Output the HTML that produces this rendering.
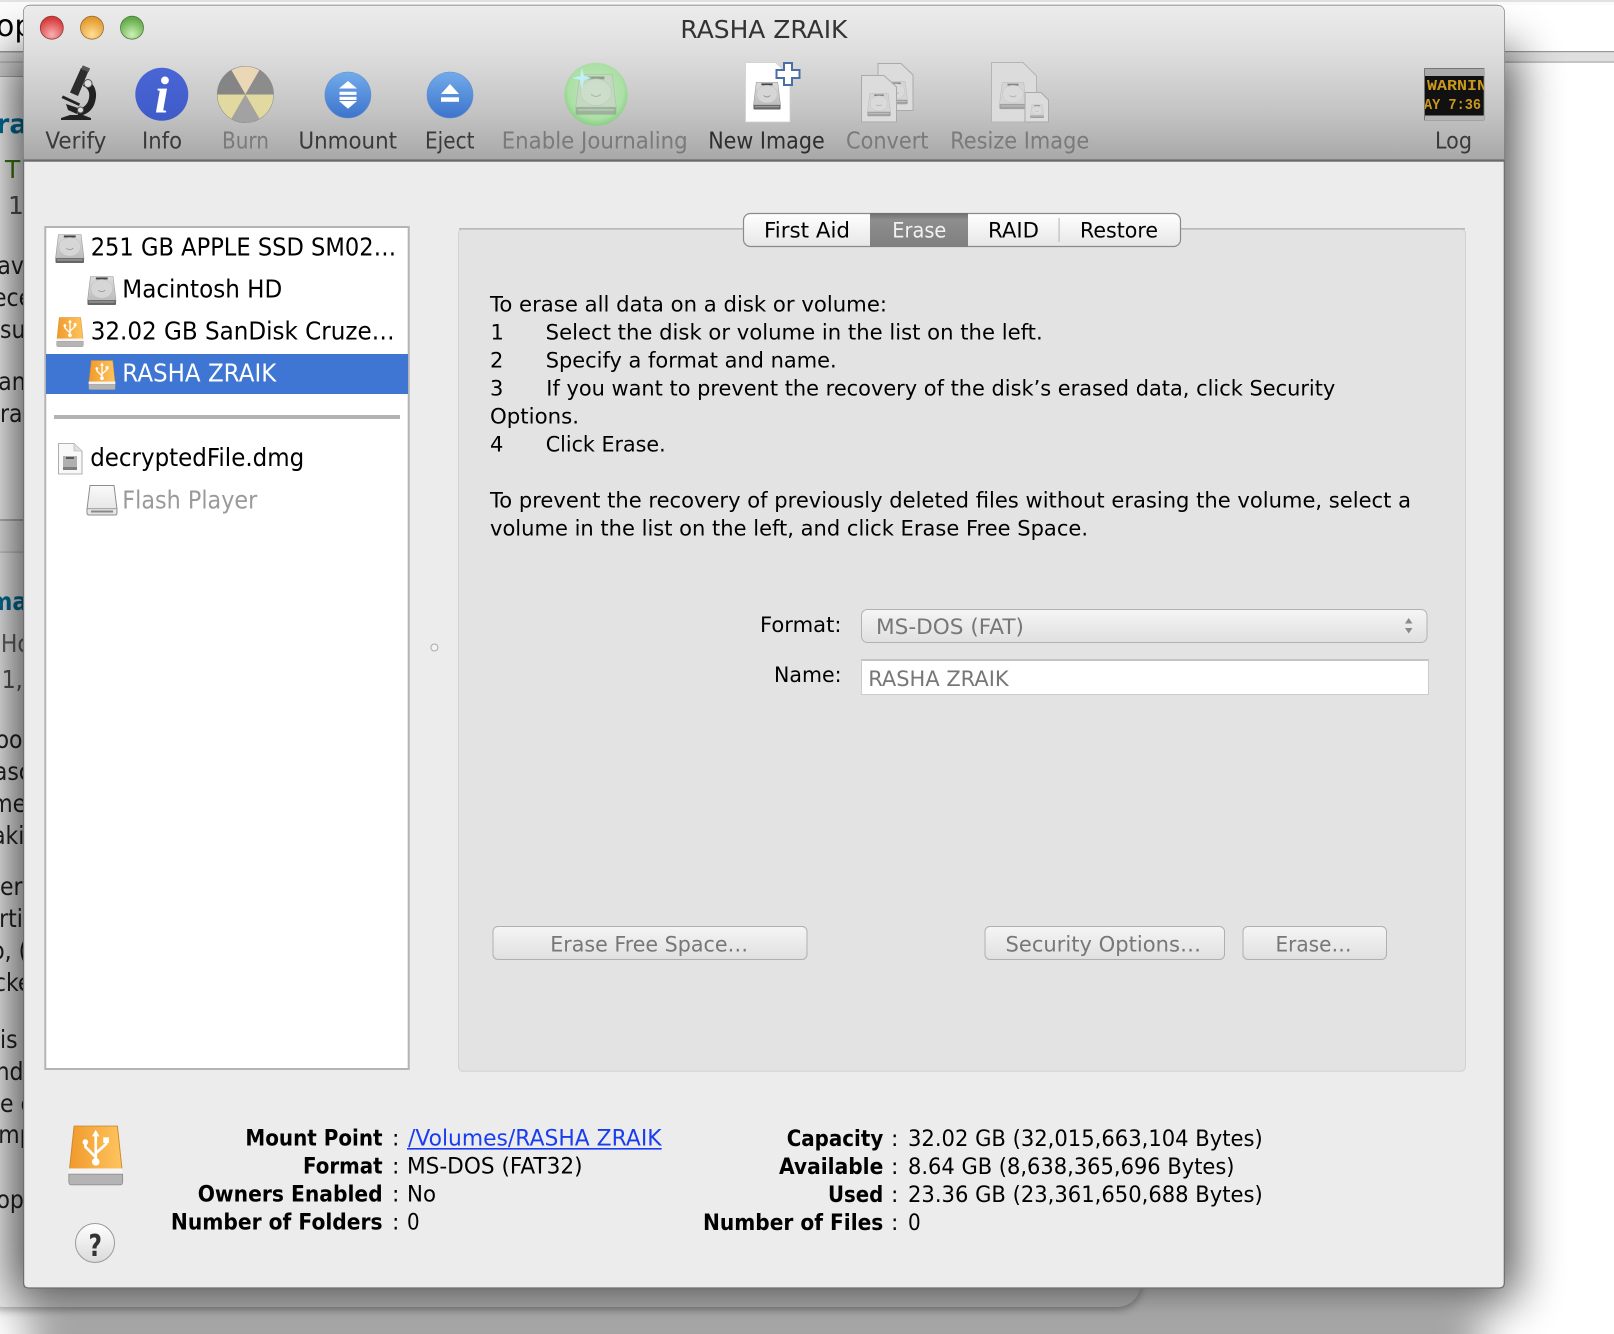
<!DOCTYPE html>
<html><head><meta charset="utf-8"><title>RASHA ZRAIK</title>
<style>
html,body{margin:0;padding:0;background:#fff;width:1614px;height:1334px;overflow:hidden}
svg{display:block}
text{font-family:"DejaVu Sans","Liberation Sans",sans-serif;fill:#000}
.tb{font-size:23px;fill:#3a3a3a}
.dis{font-size:23px;fill:#7a7a7a}
.ls{font-size:24.5px}
.bd{font-size:21px}
.lb{font-size:22px;font-weight:bold}
.vl{font-size:22px}
.bg{font-size:25px;fill:#222}
</style></head><body>
<svg width="1614" height="1334" viewBox="0 0 1614 1334" xmlns="http://www.w3.org/2000/svg">
<defs>
<linearGradient id="tbg" x1="0" y1="0" x2="0" y2="1"><stop offset="0" stop-color="#ececec"/><stop offset=".3" stop-color="#dedede"/><stop offset=".7" stop-color="#c3c3c3"/><stop offset="1" stop-color="#a8a8a8"/></linearGradient>
<linearGradient id="btn" x1="0" y1="0" x2="0" y2="1"><stop offset="0" stop-color="#f5f5f5"/><stop offset="1" stop-color="#e0e0e0"/></linearGradient>
<linearGradient id="tab" x1="0" y1="0" x2="0" y2="1"><stop offset="0" stop-color="#ffffff"/><stop offset="1" stop-color="#e6e6e6"/></linearGradient>
<linearGradient id="sel" x1="0" y1="0" x2="0" y2="1"><stop offset="0" stop-color="#6e6e6e"/><stop offset=".2" stop-color="#8e8e8e"/><stop offset="1" stop-color="#7f7f7f"/></linearGradient>
<linearGradient id="blue" x1="0" y1="0" x2="0" y2="1"><stop offset="0" stop-color="#72abea"/><stop offset="1" stop-color="#3d74cc"/></linearGradient>
<linearGradient id="info" x1="0" y1="0" x2="0" y2="1"><stop offset="0" stop-color="#4a66d6"/><stop offset="1" stop-color="#3f5bc8"/></linearGradient>
<linearGradient id="silver" x1="0" y1="0" x2="0" y2="1"><stop offset="0" stop-color="#dcdcdc"/><stop offset="1" stop-color="#bcbcbc"/></linearGradient>
<linearGradient id="org" x1="0" y1="0" x2="1" y2="0"><stop offset="0" stop-color="#f09a2c"/><stop offset="1" stop-color="#ffc45e"/></linearGradient>
<linearGradient id="hlp" x1="0" y1="0" x2="0" y2="1"><stop offset="0" stop-color="#ffffff"/><stop offset="1" stop-color="#dadada"/></linearGradient>
<linearGradient id="fl" x1="0" y1="0" x2="0" y2="1"><stop offset="0" stop-color="#fafafa"/><stop offset="1" stop-color="#e2e2e2"/></linearGradient>
<radialGradient id="rd" cx=".5" cy=".8" r=".7"><stop offset="0" stop-color="#f8b0b0"/><stop offset="1" stop-color="#d83a3a"/></radialGradient>
<radialGradient id="yl" cx=".5" cy=".8" r=".7"><stop offset="0" stop-color="#ffdf95"/><stop offset="1" stop-color="#e59a2e"/></radialGradient>
<radialGradient id="gr" cx=".5" cy=".8" r=".7"><stop offset="0" stop-color="#cdf0b5"/><stop offset="1" stop-color="#62ab4a"/></radialGradient>
<radialGradient id="ej" cx=".5" cy=".45" r=".55"><stop offset="0" stop-color="#c6e6c0"/><stop offset=".8" stop-color="#abdfa4"/><stop offset="1" stop-color="#88cf84"/></radialGradient>
<filter id="sh" x="-20%" y="-20%" width="140%" height="140%"><feGaussianBlur stdDeviation="24"/></filter>
<filter id="sb" x="-10%" y="-60%" width="120%" height="220%"><feGaussianBlur stdDeviation="20"/></filter>
<filter id="s4" x="-5%" y="-5%" width="110%" height="110%"><feGaussianBlur stdDeviation="4"/></filter>
<clipPath id="win"><path d="M23.6 13Q23.6 5.3 31 5.3H1496Q1504.3 5.3 1504.3 13V1283Q1504.3 1288 1499 1288H29Q23.6 1288 23.6 1283Z"/></clipPath>
<clipPath id="log"><rect x="1425" y="76" width="59" height="40"/></clipPath>
<symbol id="hdd" viewBox="0 0 30 30">
<path d="M3.5 .5H26.5L29.5 25H.5Z" fill="url(#silver)" stroke="#9a9a9a" stroke-width=".6"/>
<rect x="9" y="1.5" width="12" height="2" fill="#444"/>
<ellipse cx="15" cy="13" rx="11" ry="9.5" fill="#d6d6d6" stroke="#bdbdbd" stroke-width=".5"/>
<path d="M11.5 14.5Q15 17.5 18.5 14.5" fill="none" stroke="#888" stroke-width=".8"/>
<rect x=".5" y="24.5" width="29" height="5" rx="1" fill="#666"/>
<rect x="2" y="25.7" width="26" height="1.4" fill="#9a9a9a"/>
</symbol>
<symbol id="usb" viewBox="0 0 30 32">
<path d="M3.5 .5H26.5L29 24H1Z" fill="url(#org)" stroke="#c98a30" stroke-width=".5"/>
<rect x=".7" y="23" width="28.6" height="3.5" fill="#f4f4f4"/>
<path d="M.7 26H29.3V30Q29.3 31.7 28 31.7H2Q.7 31.7 .7 30Z" fill="#b4b4b4" stroke="#888" stroke-width=".4"/>
<path d="M15 4V19M15 17L9.5 11.5V9.5M15 15L20.5 10V8" fill="none" stroke="#fff" stroke-width="1.4"/>
<path d="M15 2.5L17 6H13Z" fill="#fff"/><circle cx="15" cy="19.5" r="2" fill="#fff"/><circle cx="9.5" cy="9" r="1.5" fill="#fff"/><rect x="19" y="6.5" width="3" height="3" fill="#fff"/>
</symbol>
<symbol id="hs" viewBox="0 0 30 30">
<path d="M3.5 .5H26.5L29.5 24H.5Z" fill="#d2d2d2" stroke="#aaa" stroke-width=".5"/>
<rect x="9" y="1.8" width="12" height="2" fill="#666"/>
<ellipse cx="15" cy="13" rx="11" ry="9.5" fill="#dadada" stroke="#bbb" stroke-width=".5"/>
<path d="M11.5 14.5Q15 17.5 18.5 14.5" fill="none" stroke="#999" stroke-width=".8"/>
<rect x=".5" y="23.5" width="29" height="5.5" rx="1" fill="#8e8e8e"/>
<rect x="2" y="25" width="26" height="1.4" fill="#b0b0b0"/>
</symbol>
</defs>

<!-- background window -->
<rect width="1614" height="1334" fill="#ffffff"/>
<rect x="-20" y="-20" width="1161" height="1327" rx="24" fill="#000" opacity=".3" filter="url(#s4)" transform="translate(0,3)"/>
<rect x="-20" y="-20" width="1161" height="1327" rx="24" fill="#f2f2f2"/>
<rect x="0" y="0" width="1614" height="5" fill="#fbfbfb"/>
<rect x="0" y="0" width="1614" height="2" fill="#e2e2e2"/>
<rect x="0" y="5" width="30" height="47" fill="#fbfbfb"/>
<rect x="0" y="52" width="30" height="25" fill="#d6d6d6"/>
<rect x="0" y="51" width="30" height="1.5" fill="#999"/>
<rect x="0" y="61.5" width="30" height="1.2" fill="#aaa"/>
<rect x="0" y="76" width="30" height="1.2" fill="#aaa"/>
<rect x="0" y="77" width="30" height="443" fill="#fafafa"/>
<rect x="0" y="520" width="30" height="32" fill="#ececec"/>
<rect x="0" y="519" width="30" height="2" fill="#bbb"/>
<rect x="0" y="551.5" width="30" height="1.2" fill="#c4c4c4"/>
<rect x="1500" y="52" width="114" height="10" fill="#dfdfdf"/>
<rect x="1500" y="51" width="114" height="1.2" fill="#999"/>
<rect x="1500" y="61.5" width="114" height="1.2" fill="#aaa"/>
<text x="-4" y="36" class="bg" style="font-size:30px;fill:#000">op</text>
<text x="-4" y="133" class="bg" style="font-weight:bold;font-size:27px;fill:#00709e">ra</text>
<text x="5" y="178" class="bg" style="fill:#3f7a10">T</text>
<text x="8" y="214" class="bg" style="fill:#555">1</text>
<g transform="scale(.88 1)">
<text x="-3" y="274" class="bg">av</text>
<text x="-8" y="306" class="bg">ece</text>
<text x="0" y="338" class="bg">su</text>
<text x="-2" y="390" class="bg">an</text>
<text x="0" y="422" class="bg">ra</text>
<text x="-12" y="610" class="bg" style="font-weight:bold;fill:#00709e">ma</text>
<text x="1" y="652" class="bg" style="fill:#666">Hc</text>
<text x="2" y="688" class="bg" style="fill:#555">1,</text>
<text x="-5" y="748" class="bg">oo</text>
<text x="-7" y="780" class="bg">asc</text>
<text x="-10" y="812" class="bg">me</text>
<text x="-9" y="844" class="bg">aki</text>
<text x="0" y="895" class="bg">er</text>
<text x="-1" y="927" class="bg">rti</text>
<text x="-10" y="959" class="bg">o, (</text>
<text x="-7" y="991" class="bg">cke</text>
<text x="0" y="1048" class="bg">is</text>
<text x="-5" y="1080" class="bg">nd</text>
<text x="0" y="1112" class="bg">e c</text>
<text x="-2" y="1143" class="bg">mp</text>
<text x="-4" y="1208" class="bg">op</text>
</g>

<!-- shadow -->
<rect x="13" y="50" width="1502" height="1250" fill="#000" opacity=".7" filter="url(#sh)"/>
<rect x="30" y="1310" width="1450" height="90" fill="#000" opacity=".36" filter="url(#sb)"/>

<!-- window -->
<path d="M23.6 13Q23.6 5.3 31 5.3H1496Q1504.3 5.3 1504.3 13V1283Q1504.3 1288 1499 1288H29Q23.6 1288 23.6 1283Z" fill="#ececec" stroke="#6e6e6e" stroke-width="1.2"/>
<g clip-path="url(#win)">
<rect x="23" y="5" width="1483" height="155" fill="url(#tbg)"/>
<rect x="23" y="159.4" width="1483" height="2.3" fill="#6a6a6a"/>
<rect x="23" y="5" width="1483" height="1" fill="#b0b0b0"/>
</g>

<!-- traffic lights -->
<circle cx="51.8" cy="27.7" r="11.5" fill="url(#rd)" stroke="#8c3a3a" stroke-width=".8"/>
<circle cx="92" cy="27.7" r="11.5" fill="url(#yl)" stroke="#96703a" stroke-width=".8"/>
<circle cx="132" cy="27.7" r="11.5" fill="url(#gr)" stroke="#4d7a3e" stroke-width=".8"/>
<text x="680.4" y="38" style="font-size:25px;fill:#333" textLength="167" lengthAdjust="spacingAndGlyphs">RASHA ZRAIK</text>

<!-- microscope -->
<g transform="translate(0,2)">
<g fill="#222">
<path d="M81 66L88.5 69L78 94L70 90.5Z" fill="#2c2c2c"/>
<rect x="81.5" y="64.5" width="8" height="4" transform="rotate(22 85 67)" fill="#555"/>
<path d="M85 78C95 80 98 91 95 100C93 108 87 113 78 114L77 108C84 106 88 102 89 96C90 90 88 86 83 84Z"/>
<path d="M61.5 96L63 93.5L80 101.5L79 104Z"/>
<path d="M66 102L78 106L77 112L68 108Z"/>
<path d="M70 113H83L91 116V118H61V116Z"/>
</g>
<circle cx="88" cy="81.5" r="4" fill="#ddd" stroke="#555"/>
<circle cx="80.5" cy="108" r="3" fill="#ddd" stroke="#555"/>
</g>

<!-- info -->
<circle cx="161.8" cy="94.3" r="26.5" fill="url(#info)"/>
<text x="161.8" y="112.5" text-anchor="middle" style="font-family:'Liberation Serif',serif;font-style:italic;font-weight:bold;font-size:52px;fill:#fff">i</text>

<!-- burn -->
<g transform="translate(245.4,94.5)">
<circle r="28.5" fill="#8a8a8a"/>
<path d="M0 0L14 -24.25A28 28 0 0 0 -14 -24.25Z" fill="#e9d7b6"/>
<path d="M0 0L28 0A28 28 0 0 0 14 -24.25Z" fill="#8c8c8c"/>
<path d="M0 0L-14 -24.25A28 28 0 0 0 -28 0Z" fill="#858585"/>
<path d="M0 0L-28 0A28 28 0 0 0 -14 24.25Z" fill="#e2d9a0"/>
<path d="M0 0L14 24.25A28 28 0 0 0 28 0Z" fill="#e2d9a0"/>
<path d="M0 0L-14 24.25A28 28 0 0 0 14 24.25Z" fill="#a2a2a2"/>
</g>

<!-- unmount -->
<circle cx="347.9" cy="95" r="23" fill="url(#blue)" stroke="#5e8ecf" stroke-width=".6"/>
<path d="M348 81L357 88.5H339Z M348 108.7L357 101H339Z" fill="#fff"/>
<rect x="339.5" y="91.7" width="17" height="3.2" fill="#fff"/><rect x="339.5" y="96.8" width="17" height="3.2" fill="#fff"/>

<!-- eject -->
<circle cx="450" cy="95" r="23" fill="url(#blue)" stroke="#5e8ecf" stroke-width=".6"/>
<path d="M450 84L459 94H441Z" fill="#fff"/><rect x="441" y="97.3" width="18" height="4.5" fill="#fff"/>

<!-- journaling -->
<circle cx="596" cy="94.3" r="31.6" fill="url(#ej)"/>
<use href="#hs" x="575" y="74" width="42" height="42" opacity=".55"/>
<path d="M582 68L584 76L592 78L584 80L582 90L580 80L572 78L580 76Z" fill="#bff0f5"/>

<!-- new image -->
<path d="M745.5 62.7H776L790 77V122H745.5Z" fill="#fff" stroke="#cfcfcf" stroke-width=".7"/>
<use href="#hdd" x="753" y="81" width="28" height="30"/>
<path d="M784 63H792V70H799.5V78H792V85H784V78H776.5V70H784Z" fill="#fff" stroke="#4a6ea8" stroke-width="2"/>

<!-- convert -->
<path d="M878 63.5H901L913 75V110.5H878Z" fill="#dcdcdc" stroke="#aaa"/>
<use href="#hs" x="884" y="80" width="24" height="26" opacity=".75"/>
<path d="M861.5 75.5H884L896.5 87V122H861.5Z" fill="#dcdcdc" stroke="#aaa"/>
<use href="#hs" x="867" y="92" width="24" height="26" opacity=".75"/>

<!-- resize -->
<path d="M991.5 62.5H1023L1036.5 76V122H991.5Z" fill="#dcdcdc" stroke="#b4b4b4"/>
<use href="#hs" x="999" y="81" width="28" height="30" opacity=".75"/>
<path d="M1025 92.5H1041L1048.5 100V122H1025Z" fill="#dcdcdc" stroke="#aaa"/>
<use href="#hs" x="1030" y="104" width="14" height="15" opacity=".8"/>

<!-- log -->
<rect x="1424.5" y="68.5" width="59.5" height="51.5" fill="#111" stroke="#777" stroke-width=".8"/>
<rect x="1425" y="69" width="59" height="7" fill="#aaa"/>
<rect x="1425" y="115.5" width="59" height="4.5" fill="#b4b4b4"/>
<g clip-path="url(#log)">
<text x="1427" y="90" textLength="60" lengthAdjust="spacingAndGlyphs" style="font-family:'Liberation Mono',monospace;font-weight:bold;font-size:15px;fill:#c9981e">WARNIN</text>
<text x="1424" y="109" textLength="57" lengthAdjust="spacingAndGlyphs" style="font-family:'Liberation Mono',monospace;font-weight:bold;font-size:15px;fill:#c9981e">AY 7:36</text>
</g>

<!-- toolbar labels -->
<text x="45.4" y="148.3" class="tb" textLength="61" lengthAdjust="spacingAndGlyphs">Verify</text>
<text x="142" y="148.3" class="tb" textLength="40" lengthAdjust="spacingAndGlyphs">Info</text>
<text x="222" y="148.3" class="dis" textLength="47" lengthAdjust="spacingAndGlyphs">Burn</text>
<text x="298.5" y="148.3" class="tb" textLength="98.5" lengthAdjust="spacingAndGlyphs">Unmount</text>
<text x="425" y="148.3" class="tb" textLength="49.5" lengthAdjust="spacingAndGlyphs">Eject</text>
<text x="501.7" y="148.3" class="dis" textLength="186" lengthAdjust="spacingAndGlyphs">Enable Journaling</text>
<text x="708.2" y="148.3" class="tb" style="fill:#2e2e2e" textLength="116.5" lengthAdjust="spacingAndGlyphs">New Image</text>
<text x="846" y="148.3" class="dis" textLength="82.5" lengthAdjust="spacingAndGlyphs">Convert</text>
<text x="950.2" y="148.3" class="dis" textLength="139" lengthAdjust="spacingAndGlyphs">Resize Image</text>
<text x="1435" y="148.3" class="tb" textLength="37" lengthAdjust="spacingAndGlyphs">Log</text>

<!-- sidebar -->
<rect x="45.3" y="227" width="363.4" height="842" fill="#fff" stroke="#b4b4b4" stroke-width="2"/>
<rect x="46" y="354" width="362" height="40" fill="#3f76d3"/>
<rect x="54" y="415" width="346" height="4" fill="#b3b3b3"/>
<use href="#hdd" x="55" y="234" width="29.5" height="29.5"/>
<use href="#hdd" x="87" y="276" width="29.5" height="29.5"/>
<use href="#usb" x="56" y="317" width="28" height="30"/>
<use href="#usb" x="88" y="360" width="28" height="30"/>
<path d="M58.5 443.5H74L82 451V474H58.5Z" fill="#f8f8f8" stroke="#9a9a9a" stroke-width=".8"/>
<path d="M74 443.5V451H82" fill="#e0e0e0" stroke="#aaa" stroke-width=".6"/>
<rect x="63" y="456" width="14" height="14" fill="#b0b0b0"/><rect x="66" y="457" width="8" height="2" fill="#555"/><rect x="63" y="467" width="14" height="3" fill="#7c7c7c"/>
<path d="M90 485.5H114L117 509V513Q117 515 115 515H89Q87 515 87 513V509Z" fill="url(#fl)" stroke="#8e8e8e"/>
<rect x="87.5" y="508" width="29" height="1.2" fill="#aaa"/><rect x="91" y="510.5" width="22" height="2" fill="#888"/>
<text x="90.7" y="255.7" class="ls" textLength="305.5" lengthAdjust="spacingAndGlyphs">251 GB APPLE SSD SM02…</text>
<text x="122.3" y="297.7" class="ls" textLength="160" lengthAdjust="spacingAndGlyphs">Macintosh HD</text>
<text x="90.7" y="339.3" class="ls" textLength="304" lengthAdjust="spacingAndGlyphs">32.02 GB SanDisk Cruze…</text>
<text x="122.3" y="381.7" class="ls" style="fill:#fff" textLength="154" lengthAdjust="spacingAndGlyphs">RASHA ZRAIK</text>
<text x="90.2" y="466" class="ls" textLength="214" lengthAdjust="spacingAndGlyphs">decryptedFile.dmg</text>
<text x="122.3" y="508.3" class="ls" style="fill:#9a9a9a" textLength="135" lengthAdjust="spacingAndGlyphs">Flash Player</text>

<circle cx="434.4" cy="647.5" r="3.5" fill="#f2f2f2" stroke="#aaa"/>

<!-- panel -->
<rect x="458.5" y="228.8" width="1007" height="842.5" rx="5" fill="#e3e3e3" stroke="#d2d2d2"/>
<rect x="459" y="228.2" width="1006" height="1.3" fill="#aeaeae"/>

<!-- tabs -->
<rect x="743.5" y="213.5" width="437" height="33" rx="7" fill="url(#tab)" stroke="#8a8a8a" stroke-width="1.2"/>
<rect x="870" y="213" width="98" height="34" fill="url(#sel)"/>
<rect x="1058.5" y="218" width="1.2" height="24" fill="#bdbdbd"/>
<text x="764" y="237.7" class="bd" textLength="86" lengthAdjust="spacingAndGlyphs">First Aid</text>
<text x="892.3" y="237.7" class="bd" style="fill:#f2f2f2" textLength="54" lengthAdjust="spacingAndGlyphs">Erase</text>
<text x="988" y="237.7" class="bd" textLength="51" lengthAdjust="spacingAndGlyphs">RAID</text>
<text x="1080" y="237.7" class="bd" textLength="78" lengthAdjust="spacingAndGlyphs">Restore</text>

<!-- body text -->
<text x="490" y="311.7" class="bd" textLength="397" lengthAdjust="spacingAndGlyphs">To erase all data on a disk or volume:</text>
<text x="490.5" y="339.7" class="bd">1</text>
<text x="545.7" y="339.7" class="bd" textLength="497" lengthAdjust="spacingAndGlyphs">Select the disk or volume in the list on the left.</text>
<text x="490" y="367.7" class="bd">2</text>
<text x="545.7" y="367.7" class="bd" textLength="291" lengthAdjust="spacingAndGlyphs">Specify a format and name.</text>
<text x="490" y="395.7" class="bd">3</text>
<text x="546.3" y="395.7" class="bd" textLength="789" lengthAdjust="spacingAndGlyphs">If you want to prevent the recovery of the disk’s erased data, click Security</text>
<text x="490" y="423.7" class="bd" textLength="89" lengthAdjust="spacingAndGlyphs">Options.</text>
<text x="490" y="451.7" class="bd">4</text>
<text x="545.7" y="451.7" class="bd" textLength="120" lengthAdjust="spacingAndGlyphs">Click Erase.</text>
<text x="490" y="507.7" class="bd" textLength="921" lengthAdjust="spacingAndGlyphs">To prevent the recovery of previously deleted files without erasing the volume, select a</text>
<text x="490" y="535.7" class="bd" textLength="598" lengthAdjust="spacingAndGlyphs">volume in the list on the left, and click Erase Free Space.</text>

<!-- form -->
<text x="760" y="632" class="bd" textLength="81.5" lengthAdjust="spacingAndGlyphs">Format:</text>
<text x="774" y="682" class="bd" textLength="67.5" lengthAdjust="spacingAndGlyphs">Name:</text>
<rect x="861.5" y="609.5" width="565.5" height="33" rx="6" fill="url(#btn)" stroke="#b2b2b2"/>
<text x="876" y="634" class="bd" style="fill:#777" textLength="148" lengthAdjust="spacingAndGlyphs">MS-DOS (FAT)</text>
<path d="M1408.7 618L1412.5 623.5H1405Z M1408.7 633.5L1412.5 628H1405Z" fill="#8a8a8a"/>
<rect x="861.5" y="659.5" width="567" height="35" fill="#fff" stroke="#cccccc"/>
<rect x="861.5" y="659" width="567" height="2" fill="#c4c4c4"/>
<text x="868.2" y="686" class="bd" style="fill:#777" textLength="140.5" lengthAdjust="spacingAndGlyphs">RASHA ZRAIK</text>

<!-- buttons -->
<rect x="493" y="926.5" width="314" height="33" rx="5" fill="url(#btn)" stroke="#b0b0b0"/>
<rect x="985" y="926.5" width="239.5" height="33" rx="5" fill="url(#btn)" stroke="#b0b0b0"/>
<rect x="1243" y="926.5" width="143.5" height="33" rx="5" fill="url(#btn)" stroke="#b0b0b0"/>
<text x="550.2" y="951.7" class="bd" style="fill:#777" textLength="198" lengthAdjust="spacingAndGlyphs">Erase Free Space…</text>
<text x="1005.5" y="951.7" class="bd" style="fill:#777" textLength="195.5" lengthAdjust="spacingAndGlyphs">Security Options…</text>
<text x="1275.5" y="951.7" class="bd" style="fill:#777" textLength="76" lengthAdjust="spacingAndGlyphs">Erase…</text>

<!-- footer -->
<use href="#usb" x="67.5" y="1125" width="56.5" height="60.5" preserveAspectRatio="none"/>
<circle cx="95" cy="1243" r="19.5" fill="url(#hlp)" stroke="#9a9a9a"/>
<text x="88.5" y="1256" textLength="13.5" lengthAdjust="spacingAndGlyphs" style="font-size:30px;font-weight:bold;fill:#333">?</text>

<text x="245.4" y="1145.7" class="lb" textLength="137.2" lengthAdjust="spacingAndGlyphs">Mount Point</text>
<text x="303" y="1173.7" class="lb" textLength="79.6" lengthAdjust="spacingAndGlyphs">Format</text>
<text x="197.7" y="1201.7" class="lb" textLength="185" lengthAdjust="spacingAndGlyphs">Owners Enabled</text>
<text x="170.9" y="1229.7" class="lb" textLength="211.7" lengthAdjust="spacingAndGlyphs">Number of Folders</text>
<text x="392" y="1145.7" class="vl">:</text><text x="392" y="1173.7" class="vl">:</text><text x="392" y="1201.7" class="vl">:</text><text x="392" y="1229.7" class="vl">:</text>
<text x="408" y="1145.7" class="vl" style="fill:#1a3cf0" textLength="253.6" lengthAdjust="spacingAndGlyphs">/Volumes/RASHA ZRAIK</text>
<rect x="407" y="1148" width="254.6" height="1.6" fill="#1a3cf0"/>
<text x="407" y="1173.7" class="vl" textLength="175.6" lengthAdjust="spacingAndGlyphs">MS-DOS (FAT32)</text>
<text x="407" y="1201.7" class="vl" textLength="29" lengthAdjust="spacingAndGlyphs">No</text>
<text x="407" y="1229.7" class="vl" textLength="12.6" lengthAdjust="spacingAndGlyphs">0</text>

<text x="786.7" y="1146" class="lb" textLength="96.6" lengthAdjust="spacingAndGlyphs">Capacity</text>
<text x="779" y="1174" class="lb" textLength="104.3" lengthAdjust="spacingAndGlyphs">Available</text>
<text x="828" y="1202" class="lb" textLength="55.3" lengthAdjust="spacingAndGlyphs">Used</text>
<text x="703" y="1230" class="lb" textLength="180.3" lengthAdjust="spacingAndGlyphs">Number of Files</text>
<text x="891" y="1146" class="vl">:</text><text x="891" y="1174" class="vl">:</text><text x="891" y="1202" class="vl">:</text><text x="891" y="1230" class="vl">:</text>
<text x="908" y="1146" class="vl" textLength="354.7" lengthAdjust="spacingAndGlyphs">32.02 GB (32,015,663,104 Bytes)</text>
<text x="908" y="1174" class="vl" textLength="326.5" lengthAdjust="spacingAndGlyphs">8.64 GB (8,638,365,696 Bytes)</text>
<text x="908" y="1202" class="vl" textLength="354.7" lengthAdjust="spacingAndGlyphs">23.36 GB (23,361,650,688 Bytes)</text>
<text x="908" y="1230" class="vl" textLength="12.7" lengthAdjust="spacingAndGlyphs">0</text>
</svg>
</body></html>
